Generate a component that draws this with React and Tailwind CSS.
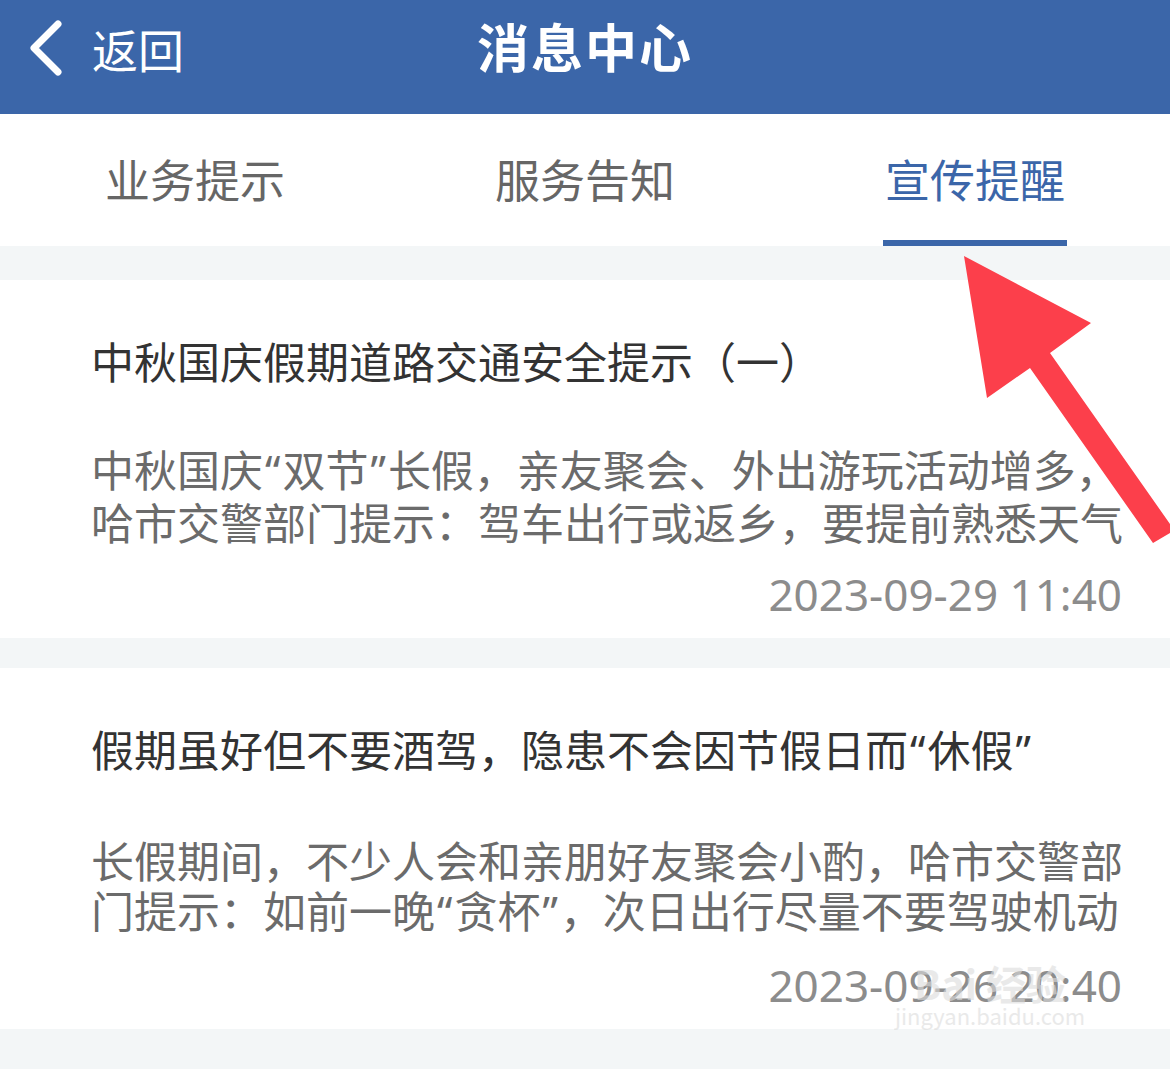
const tabs = ["业务提示", "服务告知", "宣传提醒"];

const messages = [
  {
    id: 1,
    title: "中秋国庆假期道路交通安全提示（一）",
    lines: ["中秋国庆“双节”长假，亲友聚会、外出游玩活动增多，", "哈市交警部门提示：驾车出行或返乡，要提前熟悉天气"],
    time: "2023-09-29 11:40",
  },
  {
    id: 2,
    title: "假期虽好但不要酒驾，隐患不会因节假日而“休假”",
    lines: ["长假期间，不少人会和亲朋好友聚会小酌，哈市交警部", "门提示：如前一晚“贪杯”，次日出行尽量不要驾驶机动"],
    time: "2023-09-26 20:40",
  },
];

// curly quotes in the screenshot are narrow, so render them with a latin font
const Quoted = ({ text }) =>
  text.split(/([“”])/).map((part, i) =>
    part === "“" || part === "”" ? (
      <span key={i} className="font-['Noto_Sans'] mx-[2px]">
        {part}
      </span>
    ) : (
      <span key={i}>{part}</span>
    )
  );

const App = () => {
  const active = 2;

  return (
    <div
      className="relative w-[1170px] h-[1069px] overflow-hidden bg-[#f3f6f7]"
      style={{ fontFamily: '"Noto Sans CJK SC", "Noto Sans", sans-serif' }}
    >
      {/* Header */}
      <div className="h-[114px] bg-[#3b66a9] relative">
        <div className="h-[96px] flex items-center pl-[26px]">
          <svg width="40" height="58" viewBox="0 0 40 58" fill="none">
            <path d="M32 5 L8 29 L32 53" stroke="white" strokeWidth="7" strokeLinecap="round" strokeLinejoin="round" />
          </svg>
          <span className="ml-[26px] text-white text-[46px] leading-none">返回</span>
        </div>
        <h1 className="absolute left-0 right-0 top-0 h-[92px] flex items-center justify-center text-white text-[52px] font-bold tracking-[2px]">
          消息中心
        </h1>
      </div>

      {/* Tabs */}
      <div className="h-[132px] bg-white grid grid-cols-3">
        {tabs.map((tab, i) => (
          <div key={tab} className="relative flex items-center justify-center pb-[2px]">
            <span className={`text-[45px] ${i === active ? "text-[#3b66a9]" : "text-[#666666]"}`}>{tab}</span>
            {i === active && <div className="absolute bottom-0 left-[103px] w-[184px] h-[6px] bg-[#3b66a9]" />}
          </div>
        ))}
      </div>

      {/* Message list */}
      <div className="pt-[34px] flex flex-col gap-[30px]">
        {messages.map((msg) => (
          <div key={msg.id} className="bg-white pl-[91px] pr-[48px] pt-[52px] pb-[19px]">
            <div className="text-[43px] leading-[56px] text-[#333333] whitespace-nowrap">
              <Quoted text={msg.title} />
            </div>
            <div className="mt-[55px] text-[43px] leading-[50px] text-[#6b6b6b] whitespace-nowrap">
              {msg.lines.map((line) => (
                <div key={line}>
                  <Quoted text={line} />
                </div>
              ))}
            </div>
            <div className="mt-[23px] text-right text-[44px] leading-[50px] text-[#8c8c8c] font-['Noto_Sans']">
              {msg.time}
            </div>
          </div>
        ))}
      </div>

      {/* Watermark */}
      <div className="absolute left-[895px] top-[958px] flex flex-col items-center text-[#dcdcdc] opacity-60 pointer-events-none">
        <div className="text-[40px] leading-[50px] font-bold">Bai 经验</div>
        <div className="text-[22px] leading-[26px] -mt-[6px]">jingyan.baidu.com</div>
      </div>

      {/* Red arrow overlay */}
      <svg className="absolute left-0 top-0 pointer-events-none" width="1170" height="1069" viewBox="0 0 1170 1069">
        <polygon
          points="964,256 1091,323 1050,353 1170,524 1170,533 1153,543 1030,368 987,398"
          fill="#fc3f4b"
        />
      </svg>
    </div>
  );
};

export default App;
